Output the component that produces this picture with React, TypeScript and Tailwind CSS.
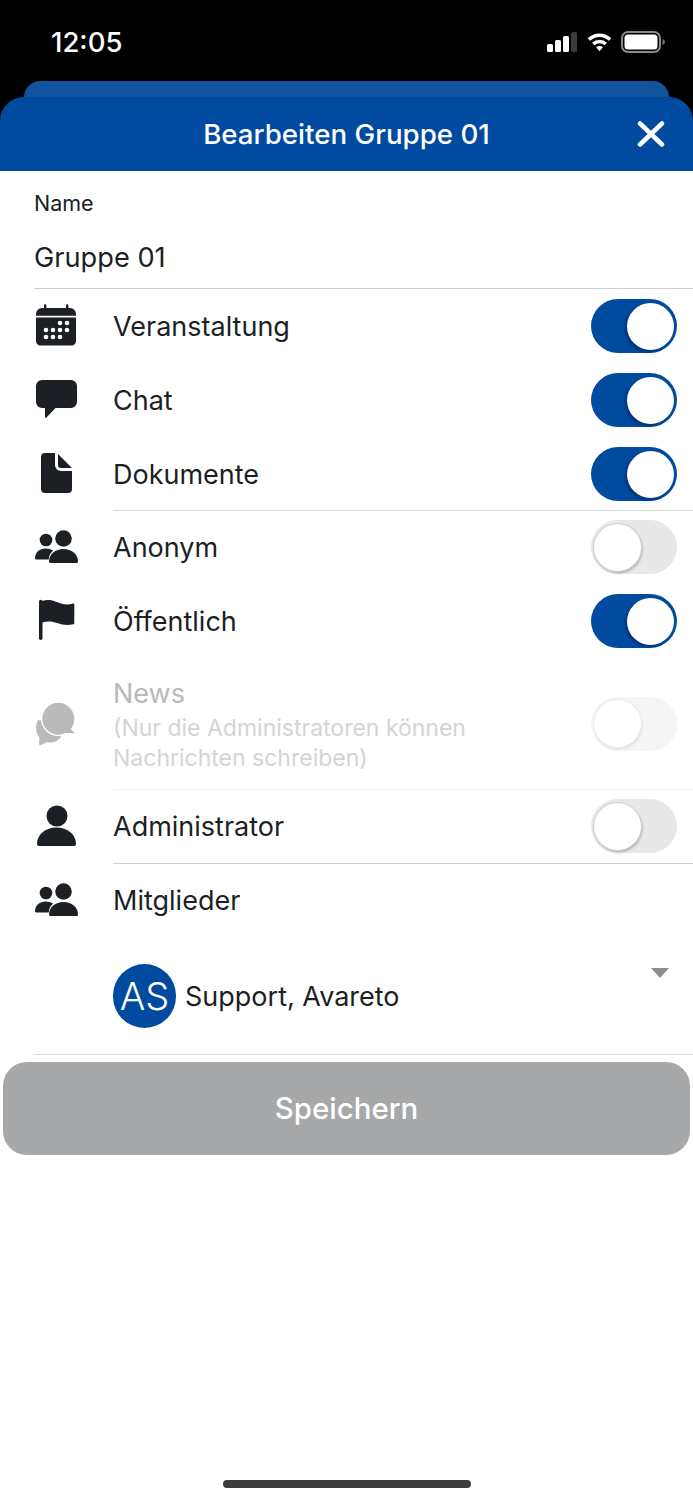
import type { ReactNode } from "react";

const Icon = ({ children, color = "#1c1f24" }: { children: ReactNode; color?: string }) => (
  <svg viewBox="0 0 46 46" fill={color} className="w-[46px] h-[46px] shrink-0">
    {children}
  </svg>
);

const CalendarIcon = () => (
  <Icon>
    <path d="M10 2.500a1.200 1.200 0 0 1 2.400 0V6H10zM32 2.500a1.200 1.200 0 0 1 2.400 0V6H32z" />
    <path d="M8 5h28a6 6 0 0 1 6 6v1.800H2V11a6 6 0 0 1 6-6z" />
    <path d="M2 14.500h40V38a4.500 4.500 0 0 1-4.500 4.500h-31A4.500 4.500 0 0 1 2 38z" />
    <g fill="#fff">
      <circle cx="26" cy="20" r="2.300" />
      <circle cx="33" cy="20" r="2.300" />
      <circle cx="12" cy="27" r="2.300" />
      <circle cx="19" cy="27" r="2.300" />
      <circle cx="26" cy="27" r="2.300" />
      <circle cx="33" cy="27" r="2.300" />
      <circle cx="12" cy="34" r="2.300" />
      <circle cx="19" cy="34" r="2.300" />
      <circle cx="26" cy="34" r="2.300" />
    </g>
  </Icon>
);

const ChatIcon = () => (
  <Icon>
    <path d="M8 3h29a6 6 0 0 1 6 6v16a6 6 0 0 1-6 6H21.500l-9 9.500c-.6.600-1.500.2-1.500-.6V31H8a6 6 0 0 1-6-6V9a6 6 0 0 1 6-6z" />
  </Icon>
);

const DocIcon = () => (
  <Icon>
    <path d="M11 2h10v12a6 6 0 0 0 6 6h11v18a4 4 0 0 1-4 4H11a4 4 0 0 1-4-4V6a4 4 0 0 1 4-4z" />
    <path d="M24 3l14 14H27a3 3 0 0 1-3-3z" />
  </Icon>
);

const UsersIcon = () => (
  <Icon>
    <circle cx="12" cy="16" r="6.300" />
    <path d="M1 34.500C1 28 6 24.500 11.500 24.500c3 0 5.500.8 7.500 2.300-2.500 2-4 4.700-4.300 8.700H2.500A1.500 1.500 0 0 1 1 34.500z" />
    <circle cx="29.500" cy="14.500" r="8.300" />
    <path d="M15 37.500c0-7.500 6.500-12.500 14.500-12.500S44 30 44 37.500a1.500 1.500 0 0 1-1.500 1.500h-26a1.500 1.500 0 0 1-1.500-1.500z" />
  </Icon>
);

const FlagIcon = () => (
  <Icon>
    <path d="M5 3.500a1.700 1.700 0 0 1 3.500 0V40.300a1.700 1.700 0 0 1-3.500 0z" />
    <path d="M8 3c5-1.500 10-1 14 .8 6 2.700 12 3.300 17 1.700.7-.2 1.300.2 1.300 1V25c0 .8-.4 1.200-1 1.300-5.500 1.200-11 .8-16-1.200-5-1.900-10-2.300-15.300-.6z" />
  </Icon>
);

const NewsIcon = () => (
  <Icon color="#bababa">
    <path d="M4 18C1 24 1.500 31 5.500 35.500L5 41.500C5 43 6 43.500 7 43l6-3c5 1.500 10 0 14-5L20 20z" />
    <path
      stroke="#fff"
      strokeWidth="1.500"
      d="M24.300 0A16.700 16.700 0 0 1 41 16.700c0 4-1.200 7.500-3.300 10.300l3.700 3.500c.6.700.2 1.500-.7 1.500L31 31.800c-2 1-4.300 1.600-6.700 1.600a16.700 16.700 0 0 1 0-33.400z"
    />
  </Icon>
);

const PersonIcon = () => (
  <Icon>
    <circle cx="23" cy="13" r="10.500" />
    <path d="M3 41c0-9.500 8.500-16.500 19.500-16.500S42 31.500 42 41a2 2 0 0 1-2 2H5a2 2 0 0 1-2-2z" />
  </Icon>
);

const Toggle = ({ on, faded }: { on?: boolean; faded?: boolean }) => (
  <div
    className={`w-[86px] h-[54px] rounded-full flex items-center shrink-0 ${
      on ? "bg-[#004ba0] justify-end pr-[3px]" : "bg-[#e8e8e8] justify-start pl-[3px]"
    } ${faded ? "opacity-40" : ""}`}
  >
    <div
      className={`w-[47px] h-[47px] rounded-full bg-white ${
        on ? "shadow-[-2px_2px_3px_rgba(0,20,70,0.45)]" : "shadow-[0_0_0_1px_#cfcfcf,1px_2px_3px_rgba(0,0,0,0.3)]"
      }`}
    />
  </div>
);

const Row = ({ icon, label, on, control = true }: { icon: ReactNode; label: string; on?: boolean; control?: boolean }) => (
  <div className="h-[74px] flex items-center pl-[34px] pr-4">
    <div className="w-[79px] flex">{icon}</div>
    <span className="flex-1 mt-[2px] text-[27px] text-[#1c1f24]">{label}</span>
    {control && <Toggle on={on} />}
  </div>
);

export default function App() {
  return (
    <div className="w-[693px] h-[1500px] bg-white flex flex-col overflow-hidden font-['Inter','Liberation_Sans',sans-serif]">
      <div className="bg-black">
        <div className="h-[81px] flex items-start justify-between pl-[51px] pr-[27px]">
          <span className="mt-[24px] text-[27.500px] leading-[36px] font-medium text-white">12:05</span>
          <div className="mt-[31px] flex items-center">
            <svg viewBox="0 0 30 22" className="w-[30px] h-[22px]">
              <rect x="0" y="13" width="6" height="8" rx="1.500" fill="#fff" />
              <rect x="8" y="9" width="6" height="12" rx="1.500" fill="#fff" />
              <rect x="16" y="5" width="6" height="16" rx="1.500" fill="#fff" />
              <rect x="24" y="1" width="6" height="20" rx="1.500" fill="#3b3b3b" />
            </svg>
            <svg viewBox="0 0 26 20" className="ml-[10px] w-[25px] h-[20px]" fill="none" stroke="#fff" strokeWidth="3.600">
              <path d="M2 7.500c6.200-6 15.800-6 22 0" />
              <path d="M6.500 12c3.800-3.500 9.200-3.500 13 0" />
              <path d="M13 19.500l-3.600-4c2-1.700 5.200-1.700 7.200 0z" fill="#fff" stroke="none" />
            </svg>
            <svg viewBox="0 0 45 22" className="ml-[9px] w-[45px] h-[22px]">
              <rect x="1" y="1" width="38" height="20" rx="6" fill="none" stroke="#8a8a8a" strokeWidth="2" />
              <rect x="3.500" y="3.500" width="33" height="15" rx="3.500" fill="#fff" />
              <path d="M41.500 8v6c1.500-.5 2.500-1.700 2.500-3s-1-2.500-2.500-3z" fill="#6f6f6f" />
            </svg>
          </div>
        </div>
        <div className="mx-6 h-4 bg-[#11549d] rounded-t-[20px]" />
        <div className="h-[74px] bg-[#004ba0] rounded-t-[24px] -mb-px flex items-center justify-center relative">
          <h1 className="mt-[2px] text-[27.700px] font-medium text-white">Bearbeiten Gruppe 01</h1>
          <svg viewBox="0 0 28 26" className="absolute right-[28px] top-[24px] w-[28px] h-[26px]" stroke="#fff" strokeWidth="4.500" strokeLinecap="round">
            <path d="M3 2.500l22 21M25 2.500l-22 21" />
          </svg>
        </div>
      </div>

      <div className="pl-[34px] pt-[19px]">
        <div className="text-[21.500px] leading-[28px] text-[#1c1f24]">Name</div>
        <div className="mt-[23px] h-[49px] text-[27.200px] leading-[36px] text-[#1c1f24] border-b border-[#cfcfcf]">Gruppe 01</div>
      </div>

      <Row icon={<CalendarIcon />} label="Veranstaltung" on />
      <Row icon={<ChatIcon />} label="Chat" on />
      <Row icon={<DocIcon />} label="Dokumente" on />
      <div className="ml-[113px] -my-px border-t border-[#d9d9d9]" />
      <Row icon={<UsersIcon />} label="Anonym" />
      <Row icon={<FlagIcon />} label="Öffentlich" on />

      <div className="h-[131px] flex items-center pl-[34px] pr-4">
        <div className="w-[79px] flex mt-[3px]"><NewsIcon /></div>
        <div className="flex-1 mt-[4px]">
          <div className="text-[27px] leading-[32px] text-[#b9b9b9]">News</div>
          <div className="mt-[3px] text-[23px] leading-[30px] text-[#d4d4d4]">
            (Nur die Administratoren können
            <br />
            Nachrichten schreiben)
          </div>
        </div>
        <Toggle faded />
      </div>
      <div className="ml-[113px] -mb-px border-t border-[#f0f0f0]" />

      <Row icon={<PersonIcon />} label="Administrator" />
      <div className="ml-[113px] -mb-px border-t border-[#cfcfcf]" />
      <Row icon={<UsersIcon />} label="Mitglieder" control={false} />

      <div className="h-[117px] pl-[113px] pr-[24px] pt-[27px] flex items-start">
        <div className="w-[63px] h-16 shrink-0 rounded-full bg-[#004ba0] flex items-center justify-center text-white text-[38px] font-light">AS</div>
        <span className="ml-[9px] mt-[15px] flex-1 text-[27px] leading-[36px] text-[#1c1f24]">Support, Avareto</span>
        <div className="mt-[4px] w-0 h-0 border-x-[9px] border-x-transparent border-t-[10px] border-t-[#8f8f8f]" />
      </div>
      <div className="ml-[34px] border-t border-[#d6d6d6]" />

      <button className="ml-[3px] w-[687px] mt-[7px] h-[93px] rounded-[24px] bg-[#a7a8aa] text-white text-[29.500px] font-medium">Speichern</button>

      <div className="mt-auto mb-[12px] mx-auto w-[248px] h-2 rounded-full bg-[#3c3c3c]" />
    </div>
  );
}
